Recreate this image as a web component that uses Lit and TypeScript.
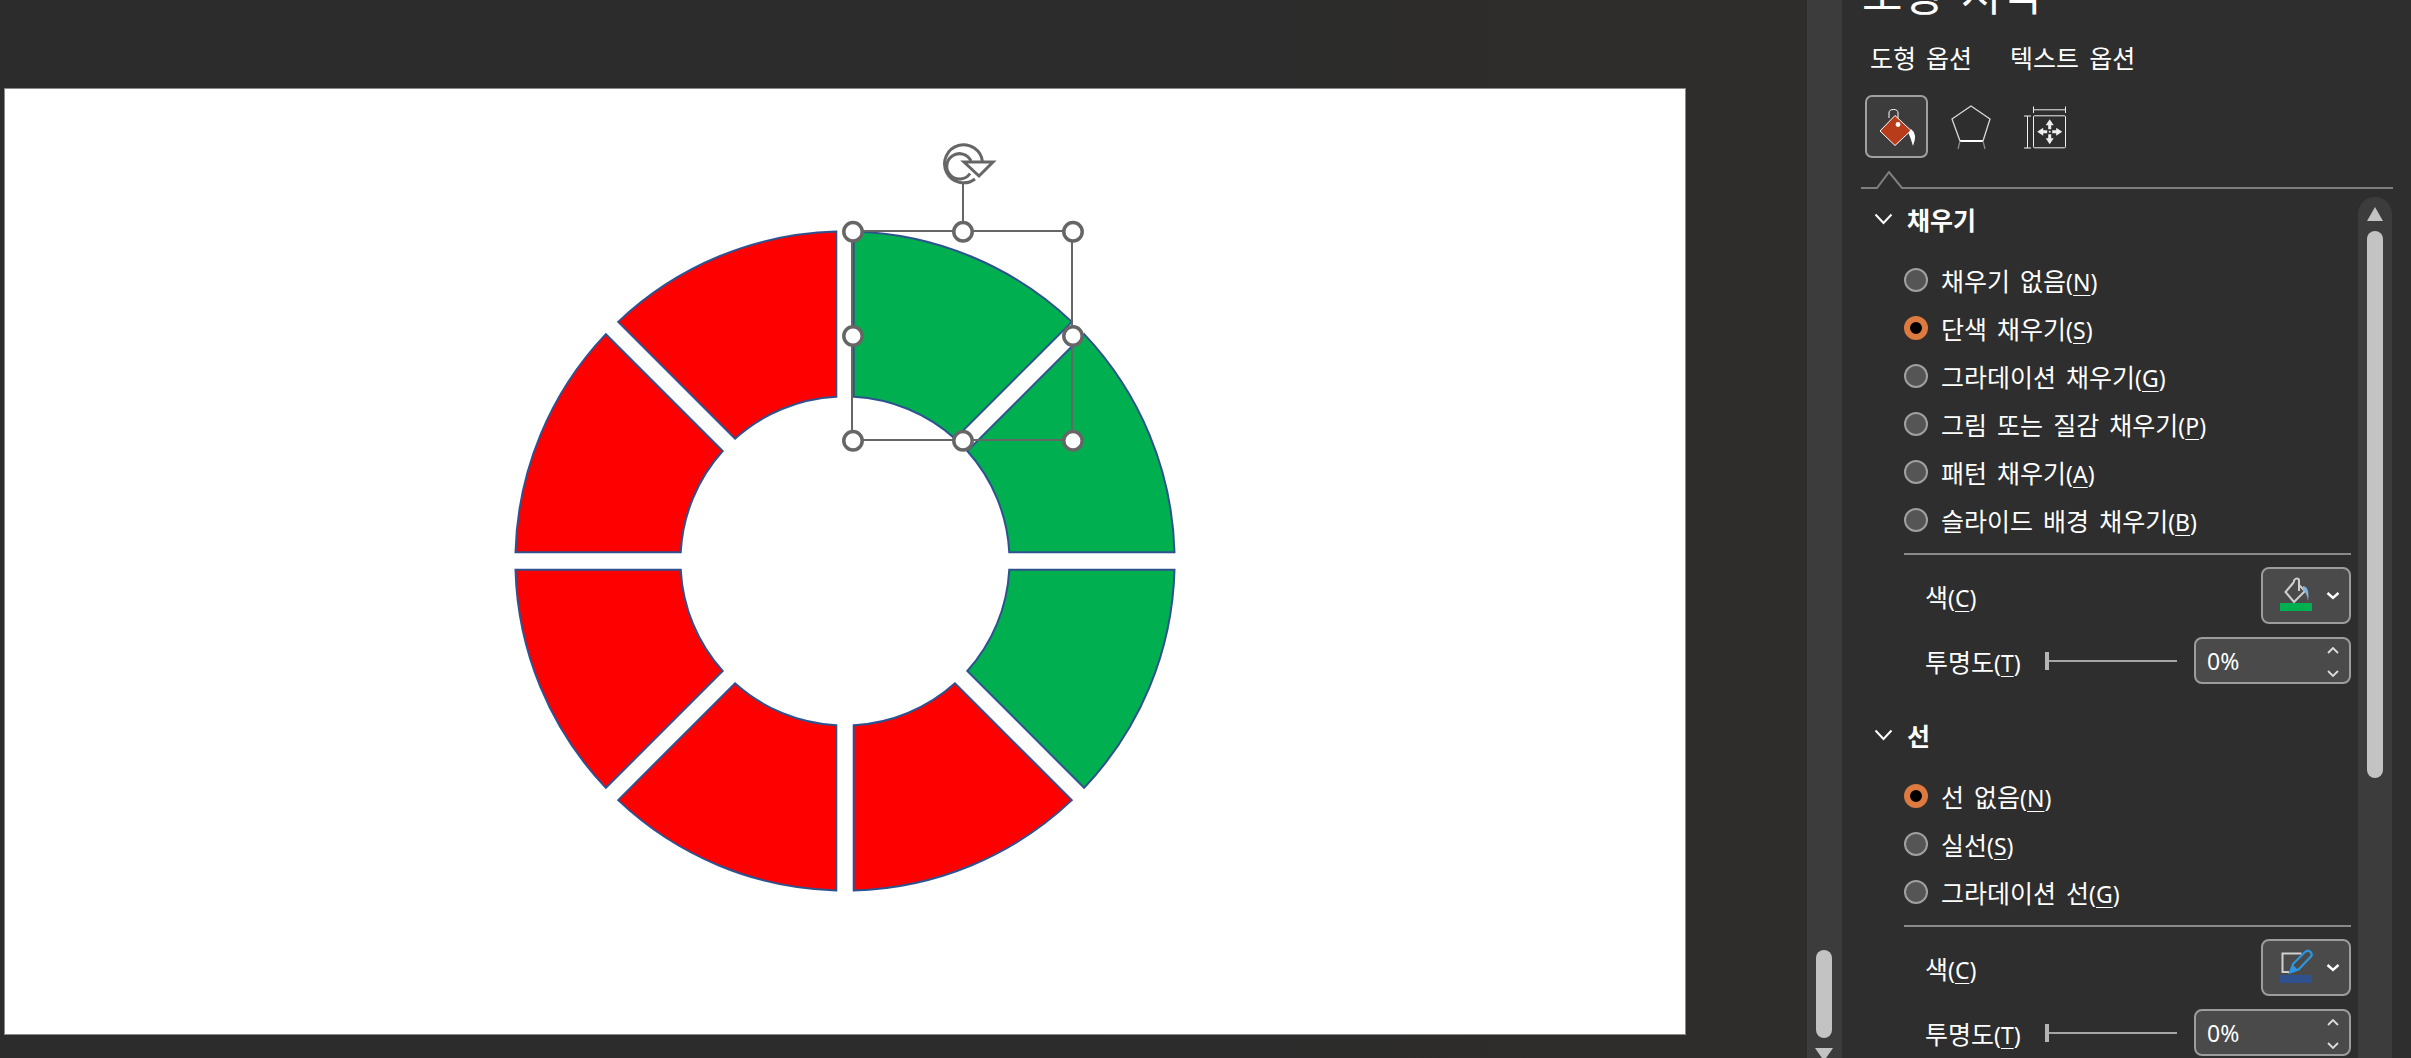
import { LitElement, html, css, svg } from "lit";
import { customElement } from "lit/decorators.js";

const CX = 845, CY = 561, R = 329.6, r = 164.5, G = 8.7;
const GREEN = "#00b050", RED = "#ff0000";

function seg(k: number): string {
  // k-th sector, clockwise from 12 o'clock, 45 degrees wide
  const a0 = (k * Math.PI) / 4, a1 = ((k + 1) * Math.PI) / 4;
  const pt = (a: number, rad: number, side: number) => {
    const along = Math.sqrt(rad * rad - G * G);
    const ux = Math.sin(a), uy = -Math.cos(a);
    const nx = Math.cos(a), ny = Math.sin(a);
    return [CX + ux * along + side * G * nx, CY + uy * along + side * G * ny].map((v) => v.toFixed(2)).join(" ");
  };
  return `M${pt(a0, R, 1)} A${R} ${R} 0 0 1 ${pt(a1, R, -1)} L${pt(a1, r, -1)} A${r} ${r} 0 0 0 ${pt(a0, r, 1)} Z`;
}

const handles: [number, number][] = [
  [853, 231.7], [963, 231.7], [1073, 231.7],
  [853, 336], [1073, 336],
  [853, 440.7], [963, 440.7], [1073, 440.7],
];

function label(text: string, key: string) {
  return html`<span class="kr">${text}</span><span class="acc">(<u>${key}</u>)</span>`;
}

@customElement("app-root")
export class AppRoot extends LitElement {
  static styles = css`
    :host { display: block; width: 2411px; height: 1058px; overflow: hidden; background: #2b2b2b; font-family: "Noto Sans CJK KR", "Noto Sans", sans-serif; color: #fff; }
    .root { display: flex; height: 1058px; overflow: hidden; }
    .canvas { width: 1807px; flex: none; padding: 88px 0 0 4px; box-sizing: border-box; background: linear-gradient(90deg, #2c2c2c 0%, #2c2c2c 60%, #2f2d2b 100%); }
    .slide { width: 1682px; height: 947px; box-sizing: border-box; background: #fff; border: 1px solid #8a8a8a; position: relative; }
    .slide svg { position: absolute; left: -5px; top: -89px; overflow: visible; }
    .vbar { width: 35px; flex: none; background: #3c3c3c; display: flex; flex-direction: column; align-items: center; padding-top: 950px; box-sizing: border-box; }
    .vthumb { width: 16px; height: 88px; flex: none; border-radius: 8px; background: #c3c3c3; margin-left: -2px; }
    .vdown { width: 0; height: 0; flex: none; border-left: 9px solid transparent; border-right: 9px solid transparent; border-top: 13px solid #c3c3c3; margin-top: 10px; margin-left: -2px; }
    .panel { flex: 1; background: #2e2e2e; padding-left: 18px; display: flex; flex-direction: column; height: 1058px; overflow: hidden; word-spacing: 4.5px; }
    .title { font-size: 44px; line-height: 60px; height: 60px; margin-top: -38px; flex: none; font-weight: 400; white-space: pre; word-spacing: 8px; margin-left: 2px; }
    .tabs { display: flex; gap: 38px; font-size: 25px; line-height: 36px; margin: 17px 0 0 10px; height: 36px; flex: none; }
    .icons { display: flex; align-items: center; gap: 11px; height: 63px; margin: 20px 0 0 5px; flex: none; }
    .iconbtn { width: 63px; height: 63px; box-sizing: border-box; border-radius: 7px; display: flex; align-items: center; justify-content: center; flex: none; }
    .iconbtn.on { background: #3c3c3c; border: 2px solid #a0a0a0; }
    .notch { height: 18px; width: 532px; margin-left: 0.5px; margin-top: 13px; flex: none; display: block; }
    .body { display: flex; flex: 1; min-height: 0; margin-top: 8px; }
    .form { width: 498px; flex: none; }
    .sb { width: 34px; flex: none; background: #3c3c3c; border-radius: 17px 17px 0 0; display: flex; flex-direction: column; align-items: center; height: 900px; }
    .up { width: 0; height: 0; border-left: 8.5px solid transparent; border-right: 8.5px solid transparent; border-bottom: 14px solid #c3c3c3; margin-top: 10px; flex: none; }
    .thumb { width: 16px; height: 547px; border-radius: 8px; background: #c3c3c3; margin-top: 10px; flex: none; }
    .head { display: flex; align-items: center; height: 44px; margin-left: 14px; font-size: 25px; font-weight: 700; gap: 14px; }
    .head svg { flex: none; }
    .radios { margin-left: 44px; margin-top: 15px; display: flex; flex-direction: column; }
    .row { display: flex; align-items: center; height: 48px; gap: 13px; font-size: 25px; white-space: nowrap; }
    .dot { width: 24px; height: 24px; box-sizing: border-box; border-radius: 50%; flex: none; background: #555; border: 2.5px solid #a0a0a0; }
    .dot.on { background: #000; border: 6px solid #dc7a3f; }
    .acc { font-family: "Noto Sans", sans-serif; font-size: 23px; }
    .acc u { text-underline-offset: 4px; text-decoration-thickness: 1px; }
    .sep { margin: 9px 0 0 44px; height: 2px; width: 447px; background: #8a8a8a; }
    .prop { display: flex; align-items: center; margin-left: 65px; width: 426px; font-size: 25px; }
    .prop.c { height: 57px; margin-top: 12px; justify-content: space-between; }
    .prop.t { height: 47px; margin-top: 13px; margin-bottom: 29px; justify-content: space-between; }
    .plabel { line-height: 1; padding-top: 2px; }
    .cbtn { width: 90px; height: 57px; box-sizing: border-box; background: #4a4a4a; border: 2px solid #9c9c9c; border-radius: 8px; display: flex; align-items: center; justify-content: center; flex: none; }
    .spin { width: 157px; height: 47px; box-sizing: border-box; background: #4a4a4a; border: 2px solid #9c9c9c; border-radius: 8px; display: flex; align-items: center; justify-content: space-between; padding: 0 10px 0 11px; font-family: "Noto Sans", sans-serif; font-size: 23px; flex: none; }
    .arrows { display: flex; flex-direction: column; gap: 16px; padding-top: 3px; }
    .arrows svg { display: block; }
    .slider { width: 132px; height: 18px; display: flex; align-items: center; flex: none; margin-left: auto; margin-right: 17px; }
    .slider i { display: block; width: 3.5px; height: 18px; background: #b5b5b5; flex: none; }
    .slider b { display: block; flex: 1; height: 2px; background: #a5a5a5; }
  `;

  private radios(items: [string, string, boolean][]) {
    return html`<div class="radios">
      ${items.map(([t, k, on]) => html`<div class="row"><span class="dot ${on ? "on" : ""}"></span><span>${label(t, k)}</span></div>`)}
    </div>`;
  }

  private chev() {
    return html`<svg width="19" height="12" viewBox="0 0 19 12"><path d="M1.5 1.5 L9.5 10 L17.5 1.5" fill="none" stroke="#fff" stroke-width="2"/></svg>`;
  }

  private spin() {
    return html`<div class="spin"><span>0%</span><span class="arrows">
      <svg width="12" height="7" viewBox="0 0 12 7"><path d="M1 6 L6 1 L11 6" fill="none" stroke="#ddd" stroke-width="1.8"/></svg>
      <svg width="12" height="7" viewBox="0 0 12 7"><path d="M1 1 L6 6 L11 1" fill="none" stroke="#ddd" stroke-width="1.8"/></svg>
    </span></div>`;
  }

  private props(icon: unknown) {
    return html`
      <div class="sep"></div>
      <div class="prop c"><span class="plabel">${label("색", "C")}</span><div class="cbtn">${icon}</div></div>
      <div class="prop t"><span class="plabel">${label("투명도", "T")}</span><div class="slider"><i></i><b></b></div>${this.spin()}</div>
    `;
  }

  render() {
    const btnChev = svg`<path d="M66.500 26 L72 31 L77.500 26" fill="none" stroke="#fff" stroke-width="2.4"/>`;
    const fillIcon = html`<svg width="86" height="53" viewBox="0 0 86 53"><g transform="translate(-2,-2)">
        <path d="M33 15 L24.500 25 L33 35 L44 24 L38 18 M33 15 V13.500 Q34 11.500 36 11.500 Q38 11.500 38 13.500 V24" fill="none" stroke="#cfcfcf" stroke-width="2"/>
        <path d="M42 19 Q49 20 47 34 Q46 26 42 23 Z" fill="#7fb4e0"/>
        <rect x="19" y="36" width="32" height="8" fill="#00b050"/>
        ${btnChev}
      </g></svg>`;
    const penIcon = html`<svg width="86" height="53" viewBox="0 0 86 53"><g transform="translate(-2,-2)">
        <path d="M40.500 14.500 H21.500 V33 H28" fill="none" stroke="#d0d0d0" stroke-width="2"/>
        <path d="M29 33.500 L32 25 L44 13 Q47 10.500 49.500 13 Q52 15.500 49.500 18 L37.500 30.500 Z" fill="none" stroke="#2e95e0" stroke-width="2.2"/>
        <path d="M29 33.500 L31.500 25.500 L37 31 Z" fill="#2e95e0"/>
        <rect x="19" y="36" width="32" height="8" fill="#2f528f"/>
        ${btnChev}
      </g></svg>`;
    return html`<div class="root">
      <div class="canvas">
        <div class="slide">
          <svg width="1200" height="800" viewBox="0 0 1200 800">
            ${[0, 1, 2, 3, 4, 5, 6, 7].map((k) => svg`<path d=${seg(k)} fill=${k < 3 ? GREEN : RED} stroke="#2f528f" stroke-width="2"/>`)}
            <rect x="852" y="231" width="220" height="209" fill="none" stroke="#666" stroke-width="2"/>
            <line x1="963" y1="183" x2="963" y2="231" stroke="#666" stroke-width="2"/>
            <g fill="none" stroke="#666" stroke-width="3">
              <path d="M975 179 A19 19 0 1 1 982.500 162" />
              <path d="M970 173.500 A12.700 12.700 0 1 1 971 161" />
              <path d="M964 162 H993 L979 176 Z" fill="#fff" stroke-linejoin="miter"/>
            </g>
            ${handles.map(([x, y]) => svg`<circle cx=${x} cy=${y} r="9.2" fill="#fff" stroke="#666" stroke-width="3.5"/>`)}
          </svg>
        </div>
      </div>
      <div class="vbar"><div class="vthumb"></div><div class="vdown"></div></div>
      <div class="panel">
        <div class="title">도형 서식</div>
        <div class="tabs"><span>도형 옵션</span><span>텍스트 옵션</span></div>
        <div class="icons">
          <div class="iconbtn on">
            <svg width="44" height="44" viewBox="0 0 44 44">
              <path d="M14 13 V8 Q14 4.500 18.500 4.500 Q23 4.500 23 8 V18" fill="none" stroke="#fff" stroke-width="1"/>
              <path d="M20 10.500 L36 25.500 L20 40.500 L5 26 Z" fill="#b83b1a" stroke="#fff" stroke-width="1"/>
              <circle cx="23" cy="19.500" r="2.400" fill="#fff"/>
              <path d="M36 24 Q43 29 38 41 Q36 34 33.500 28 Z" fill="#fff"/>
            </svg>
          </div>
          <div class="iconbtn">
            <svg width="44" height="48" viewBox="0 0 44 48">
              <path d="M22 3 L41 16 L34 38 H11 L3 16 Z" fill="none" stroke="#d8d8d8" stroke-width="1.3"/>
              <path d="M11 38 H34" stroke="#fff" stroke-width="2"/>
              <path d="M11 38 L9 46 M34 38 L36 46" stroke="#888" stroke-width="1.3"/>
            </svg>
          </div>
          <div class="iconbtn">
            <svg width="44" height="48" viewBox="0 0 44 48">
              <path d="M10.500 3.500 V10 M10.500 6.800 H42.500 M42.500 3.500 V10 M1 13 H8 M4.500 13 V45 M1 45 H8" fill="none" stroke="#eee" stroke-width="1"/>
              <rect x="10.500" y="12.800" width="32" height="32" rx="1" fill="none" stroke="#eee" stroke-width="1"/>
              <g fill="#eee" transform="translate(0.2,3.3)">
                <path d="M26.500 13 L30.500 19 H28 V23 H25 V19 H22.500 Z"/>
                <path d="M26.500 38 L30.500 32 H28 V28 H25 V32 H22.500 Z"/>
                <path d="M14 25.500 L20 21.500 V24 H24 V27 H20 V29.500 Z"/>
                <path d="M39 25.500 L33 21.500 V24 H29 V27 H33 V29.500 Z"/>
                <circle cx="26.500" cy="25.500" r="1"/>
              </g>
            </svg>
          </div>
        </div>
        <svg class="notch" viewBox="0 0 532 18"><path d="M0 17 H16 L28 1 L41 17 H532" fill="none" stroke="#7f7f7f" stroke-width="2"/></svg>
        <div class="body">
          <div class="form">
            <div class="head">${this.chev()}<span>채우기</span></div>
            ${this.radios([
              ["채우기 없음", "N", false],
              ["단색 채우기", "S", true],
              ["그라데이션 채우기", "G", false],
              ["그림 또는 질감 채우기", "P", false],
              ["패턴 채우기", "A", false],
              ["슬라이드 배경 채우기", "B", false],
            ])}
            ${this.props(fillIcon)}
            <div class="head">${this.chev()}<span>선</span></div>
            ${this.radios([
              ["선 없음", "N", true],
              ["실선", "S", false],
              ["그라데이션 선", "G", false],
            ])}
            ${this.props(penIcon)}
          </div>
          <div class="sb"><div class="up"></div><div class="thumb"></div></div>
        </div>
      </div>
    </div>`;
  }
}
